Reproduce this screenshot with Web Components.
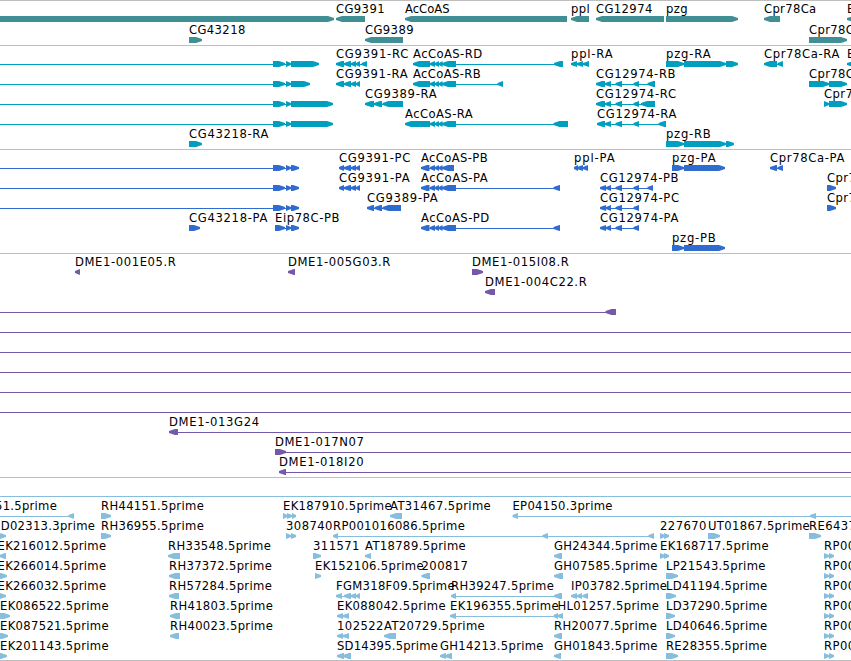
<!DOCTYPE html>
<html lang="en">
<head>
<meta charset="utf-8">
<title>Genome tracks</title>
<style>
  body { margin: 0; background: #fff; overflow: hidden; }
</style>
</head>
<body>
<genome-view></genome-view>

<script>
// Advance of each character in a label, labels are spaced out to this total
const ADV = {
  A: 7.8, C: 8.4, D: 9.2, E: 7.5, F: 6.9, G: 9.1, H: 9.4, I: 3.6, K: 8.4, L: 7, M: 10.7, P: 7.4,
  R: 8.4, S: 6.7, T: 8, U: 8.8, a: 7.2, c: 6.2, e: 7.2, g: 7.6, i: 3.3, l: 3.4, m: 11.4, o: 7.3,
  p: 7.6, r: 5, z: 6.4, '.': 3.9, '-': 7.3,
};
const advance = text => [...text].reduce((sum, ch) => sum + (ADV[ch] || 7.75), 0.4);
const FONT = '11.6px "DejaVu Sans", sans-serif';
const pen = document.createElement('canvas').getContext('2d');
pen.font = FONT;

// One feature: a label over its exons. parts="a:b c:d" are pixel columns,
// span="a:b" stretches the intron line past the exons.
class GvFeature extends HTMLElement {
  constructor() {
    super();
    this.root = this.attachShadow({ mode: 'open' });
    this.root.innerHTML = `
      <style>
        :host { position:absolute; inset:0; display:block; }
        .label { position:absolute; top:0; line-height:15px; white-space:pre; }
        svg { position:absolute; left:0; top:14px; width:100%; height:6px; overflow:hidden; }
        path { fill:var(--track-color); }
      </style>
      <svg aria-hidden="true"><path class="intron"/><path class="exons"/></svg>
      <span class="label"><slot></slot></span>
    `;
  }
  connectedCallback() {
    const pairs = s => (s || '').split(' ').filter(Boolean).map(p => p.split(':').map(Number));
    const parts = pairs(this.getAttribute('parts'));
    const span = pairs(this.getAttribute('span'))[0] || [parts[0][0], parts[parts.length - 1][1]];
    const back = this.getAttribute('strand') === '-';
    if (parts.length !== 1 || this.hasAttribute('span')) {
      this.root.querySelector('.intron').setAttribute('d', `M${span[0]} 3H${span[1]}V4H${span[0]}Z`);
    }
    let d = '';
    for (const [a, b] of parts) {
      const head = Math.min(6, b - a);
      d += back
        ? `M${b} 0H${a + head}L${a} 2V4L${a + head} 6H${b}Z`
        : `M${a} 0H${b - head}L${b} 2V4L${b - head} 6H${a}Z`;
    }
    this.root.querySelector('.exons').setAttribute('d', d);

    const label = this.root.querySelector('.label');
    const text = this.textContent;
    label.style.left = (this.getAttribute('label-x') ?? (parts[0] ? parts[0][0] : 0)) + 'px';
    if (text) label.style.letterSpacing = (advance(text) - pen.measureText(text).width) / text.length + 'px';
  }
}
customElements.define('gv-feature', GvFeature);

// One line of features inside a track
class GvRow extends HTMLElement {
  constructor() {
    super();
    this.attachShadow({ mode: 'open' }).innerHTML = `
      <style>
        :host { display:block; position:relative; height:20px; }
      </style>
      <slot></slot>
    `;
  }
}
customElements.define('gv-row', GvRow);

// A band of rows with a rule on top
class GvTrack extends HTMLElement {
  constructor() {
    super();
    this.attachShadow({ mode: 'open' }).innerHTML = `
      <style>
        :host {
          display:flex; flex-direction:column; gap:var(--row-gap, 0);
          padding:1px 0 2px; border-top:1px solid #bebebe;
        }
      </style>
      <slot></slot>
    `;
  }
}
customElements.define('gv-track', GvTrack);

// feature: [label, strand, parts, { x, span }]
const ACC = '430:435 435:439 439:442.5';
const RP = ['RP00', '+', '824:829 829:834'];
const eip = end => ['', '+', `273:285 286:291 291:${end}`, { span: '-5:' + end }];
const full = ['', '+', '', { span: '-5:860' }];

const tracks = [
  { color: '#3f8f94', gap: 1, rows: [
    [['', '+', '-20:334'], ['CG9391', '-', '336:365'], ['AcCoAS', '-', '405:567'], ['ppl', '-', '571:589'],
     ['CG12974', '-', '596:664'], ['pzg', '+', '666:738'], ['Cpr78Ca', '-', '764:780'], ['E', '-', '847:870']],
    [['CG43218', '+', '189:202'], ['CG9389', '-', '365:403'], ['Cpr78C', '+', '809:847']],
  ] },
  { color: '#009fbf', rows: [
    [eip(319), ['CG9391-RC', '-', '336:344 344:351 351:356 356:360 361.5:367'],
     ['AcCoAS-RD', '-', `413:430 ${ACC} 442:456 554:563`], ['ppl-RA', '-', '571:577 577:583 583:589'],
     ['pzg-RA', '+', '666:684 684:726 726:738'], ['Cpr78Ca-RA', '-', '764:777 777.5:783'], ['E', '-', '847:870']],
    [eip(310), ['CG9391-RA', '-', '336:344 344:351 351:356 356:360'], ['AcCoAS-RB', '-', `413:430 ${ACC} 442:456 497.5:503`],
     ['CG12974-RB', '-', '596:605 605:611 615.5:622 633.5:639 647.5:655'], ['Cpr78C', '+', '809:829 829:847']],
    [eip(333), ['CG9389-RA', '-', '365:374 374:382 382.5:403'],
     ['CG12974-RC', '-', '596:605 605:611 615.5:622 633.5:639 641:655'], ['Cpr7', '+', '824:829 829:847']],
    [eip(333), ['AcCoAS-RA', '-', `405:430 ${ACC} 442:456 553.5:568`],
     ['CG12974-RA', '-', '597:605 605:611 615.5:622 633.5:639 658.5:666']],
    [['CG43218-RA', '+', '189:202'], ['pzg-RB', '+', '666:684 684:726 726:734']],
  ] },
  { color: '#306ccf', rows: [
    [eip(299), ['CG9391-PC', '-', '339:344 344:351 351:356 356:360'], ['AcCoAS-PB', '-', `421:429.5 ${ACC} 442:454`],
     ['ppl-PA', '-', '574:578 577:583 583:588'], ['pzg-PA', '+', '672:684 684:725'], ['Cpr78Ca-PA', '-', '770:777 777.5:783']],
    [eip(299), ['CG9391-PA', '-', '339:344 344:351 351:356 356:360'], ['AcCoAS-PA', '-', `421:429.5 ${ACC} 442:456 553.5:560`],
     ['CG12974-PB', '-', '600:606 606:611 615.5:622 633.5:639 647.5:653'], ['Cpr7', '+', '827:836']],
    [eip(299), ['CG9389-PA', '-', '367:374 374.5:382 382.5:401'],
     ['CG12974-PC', '-', '600:606 606:611 615.5:622 633.5:639'], ['Cpr7', '+', '827:836']],
    [['CG43218-PA', '+', '189:200'], ['Eip78C-PB', '+', '275:285 286:291 291:299'],
     ['AcCoAS-PD', '-', `421:429.5 ${ACC} 442:456 553.5:560`], ['CG12974-PA', '-', '600:606 606:611 615.5:622 633.5:639']],
    [['pzg-PB', '+', '672:684 684:725']],
  ] },
  { color: '#7558a8', rows: [
    [['DME1-001E05.R', '-', '75:80'], ['DME1-005G03.R', '-', '288:295'], ['DME1-015I08.R', '+', '472:483']],
    [['DME1-004C22.R', '-', '485:495']],
    [['', '-', '605.5:616', { span: '-5:616' }]],
    [full], [full], [full], [full], [full],
    [['DME1-013G24', '-', '169:178', { span: '169:860' }]],
    [['DME1-017N07', '+', '275:286', { span: '275:860' }]],
    [['DME1-018I20', '-', '279:286', { span: '279:860' }]],
  ] },
  { color: '#87bddd', rows: [
    [full],
    [['51.5prime', '-', '68.5:74', { x: -5, span: '-5:74' }], ['RH44151.5prime', '+', '101:111'],
     ['EK187910.5prime', '+', '283:287.5 287:292 292:296'], ['AT31467.5prime', '-', '390:402'],
     ['EP04150.3prime', '-', '512.5:518 810:816', { span: '513:860' }]],
    [['D02313.3prime', '+', '-5:6', { x: 0.7 }], ['RH36955.5prime', '+', '101:111'], ['308740', '+', '286:291 291:296'],
     ['RP001016086.5prime', '-', '333:338 542.5:548 648.5:654'], ['227670', '+', '660:665 664:669'],
     ['UT01867.5prime', '+', '708:720'], ['RE6437', '+', '809:821']],
    [['EK216012.5prime', '-', '-1:6', { x: -2.5 }], ['RH33548.5prime', '-', '168:180'], ['311571', '+', '313:321'],
     ['AT18789.5prime', '-', '365:371'], ['GH24344.5prime', '-', '554:562'], ['EK168717.5prime', '+', '660:665 664:669'], RP],
    [['EK266014.5prime', '+', '-5:7', { x: -2.5 }], ['RH37372.5prime', '-', '169:180'], ['EK152106.5prime', '+', '315:321'],
     ['200817', '-', '421.5:430'], ['GH07585.5prime', '-', '554:563'], ['LP21543.5prime', '+', '666:678'], RP],
    [['EK266032.5prime', '+', '-5:6', { x: -2.5 }], ['RH57284.5prime', '-', '169:179'],
     ['FGM318F09.5prime', '-', '336:342 344:351 351:356 356:360'], ['RH39247.5prime', '-', '451:456 554:562'],
     ['IP03782.5prime', '-', '571:577 577:582 582.5:588'], ['LD41194.5prime', '+', '666:676'], RP],
    [['EK086522.5prime', '+', '-5:10', { x: 0 }], ['RH41803.5prime', '-', '170:180'], ['EK088042.5prime', '-', '337:343 343:349'],
     ['EK196355.5prime', '-', '450:456 553.5:558'], ['HL01257.5prime', '-', '557.5:563'], ['LD37290.5prime', '+', '666:675'], RP],
    [['EK087521.5prime', '+', '-5:8', { x: 0 }], ['RH40023.5prime', '-', '170:179'], ['102522', '-', '337:343 343:349'],
     ['AT20729.5prime', '-', '384:396'], ['RH20077.5prime', '-', '554:562'], ['LD40646.5prime', '+', '666:675'], RP],
    [['EK201143.5prime', '+', '-5:7', { x: 0 }], ['SD14395.5prime', '-', '337:344 343:351'], ['GH14213.5prime', '-', '440:446 445:452'],
     ['GH01843.5prime', '-', '554:561'], ['RE28355.5prime', '+', '666:678'], RP],
  ] },
];

class GenomeView extends HTMLElement {
  constructor() {
    super();
    const feature = ([label, strand, parts, opt = {}]) =>
      `<gv-feature strand="${strand}" parts="${parts}"` +
      (opt.x != null ? ` label-x="${opt.x}"` : '') +
      (opt.span ? ` span="${opt.span}"` : '') + `>${label}</gv-feature>`;
    this.attachShadow({ mode: 'open' }).innerHTML = `
      <style>
        :host {
          display:flex; flex-direction:column; box-sizing:border-box;
          width:851px; height:661px; overflow:hidden; background:#fff; color:#000;
          font:${FONT}; border-bottom:1px solid #bebebe;
        }
      </style>
      ${tracks.map(t => `<gv-track style="--track-color:${t.color};--row-gap:${t.gap || 0}px">${
        t.rows.map(r => `<gv-row>${r.map(feature).join('')}</gv-row>`).join('')
      }</gv-track>`).join('')}
    `;
  }
}
customElements.define('genome-view', GenomeView);
</script>
</body>
</html>
